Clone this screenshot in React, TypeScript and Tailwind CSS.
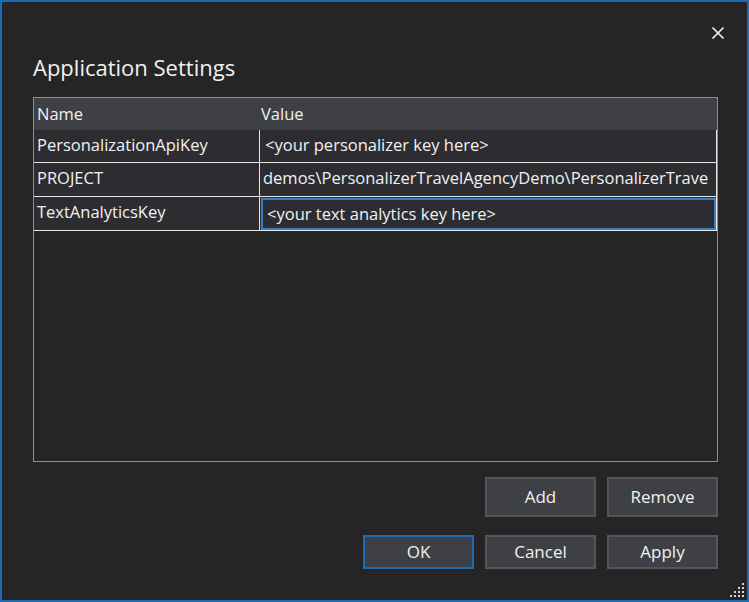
import React from "react";

const rows = [
  { name: "PersonalizationApiKey", value: "<your personalizer key here>", h: "h-[33px]", focus: false, pl: "pl-[5px]" },
  { name: "PROJECT", value: "demos\\PersonalizerTravelAgencyDemo\\PersonalizerTrave", h: "h-[34px]", focus: false, pl: "pl-[3px]" },
  { name: "TextAnalyticsKey", value: "<your text analytics key here>", h: "h-[34px]", focus: true, pl: "pl-[4px]" },
];

function Btn({ label, primary, tall }: { label: string; primary?: boolean; tall?: boolean }) {
  return (
    <div
      className={
        "w-[111px] flex items-center justify-center bg-[#3f3f46] border-2 text-[17px] " +
        (tall ? "h-[40px] " : "h-[34px] ") +
        (primary ? "border-[#1c6bb8]" : "border-[#55555b]")
      }
    >
      {label}
    </div>
  );
}

function Gripper() {
  const dots: React.ReactNode[] = [];
  for (let r = 0; r < 4; r++) {
    for (let c = 0; c < 4; c++) {
      if (c >= 3 - r) {
        dots.push(<rect key={`${r}-${c}`} x={c * 4} y={r * 4} width={2} height={2} fill="#d8d8d8" />);
      }
    }
  }
  return (
    <svg width="16" height="16" viewBox="0 0 16 16" className="absolute right-[1px] bottom-[1px]">
      {dots}
    </svg>
  );
}

export default function App() {
  return (
    <div className="w-[749px] h-[602px] border-2 border-[#1b6cb8] bg-[#252526] flex flex-col relative text-[#f1f1f1] font-['Open_Sans',sans-serif] overflow-hidden">
      <div className="h-[50px] flex justify-end pt-[24px] pr-[22px]">
        <svg width="14" height="14" viewBox="0 0 14 14">
          <path d="M1.5 1.5 L12.5 12.5 M12.5 1.5 L1.5 12.5" stroke="#f1f1f1" strokeWidth="1.7" fill="none" />
        </svg>
      </div>
      <div className="pl-[31px] text-[22px] leading-[30px] h-[30px]">Application Settings</div>
      <div className="ml-[31px] mr-[29px] mt-[15px] h-[365px] border border-[#7194bd] flex flex-col text-[16.5px]">
        <div className="h-[32px] bg-[#3f3f46] flex items-center shrink-0">
          <div className="w-[227px] pl-[3px]">Name</div>
          <div className="pl-[0px]">Value</div>
        </div>
        {rows.map((r) => (
          <div key={r.name} className={"flex shrink-0 border-b border-[#e8e8e8] bg-[#2d2d31] " + r.h}>
            <div className="w-[226px] pl-[3px] pb-[2px] flex items-center border-r border-[#e8e8e8] whitespace-nowrap">{r.name}</div>
            <div className="flex-1 min-w-0 border-r border-[#e8e8e8] flex">
              {r.focus ? (
                <div className="flex-1 ml-[1px] mt-[1px] border-2 border-[#3a7fc6] flex items-center pl-[4px] whitespace-nowrap overflow-hidden">
                  {r.value}
                </div>
              ) : (
                <div className={"flex-1 flex items-center pb-[2px] whitespace-nowrap overflow-hidden " + r.pl}>{r.value}</div>
              )}
            </div>
          </div>
        ))}
      </div>
      <div className="mt-[15px] mr-[29px] flex justify-end gap-[11px]">
        <Btn label="Add" tall />
        <Btn label="Remove" tall />
      </div>
      <div className="mt-[18px] mr-[29px] flex justify-end gap-[11px]">
        <Btn label="OK" primary />
        <Btn label="Cancel" />
        <Btn label="Apply" />
      </div>
      <Gripper />
    </div>
  );
}
